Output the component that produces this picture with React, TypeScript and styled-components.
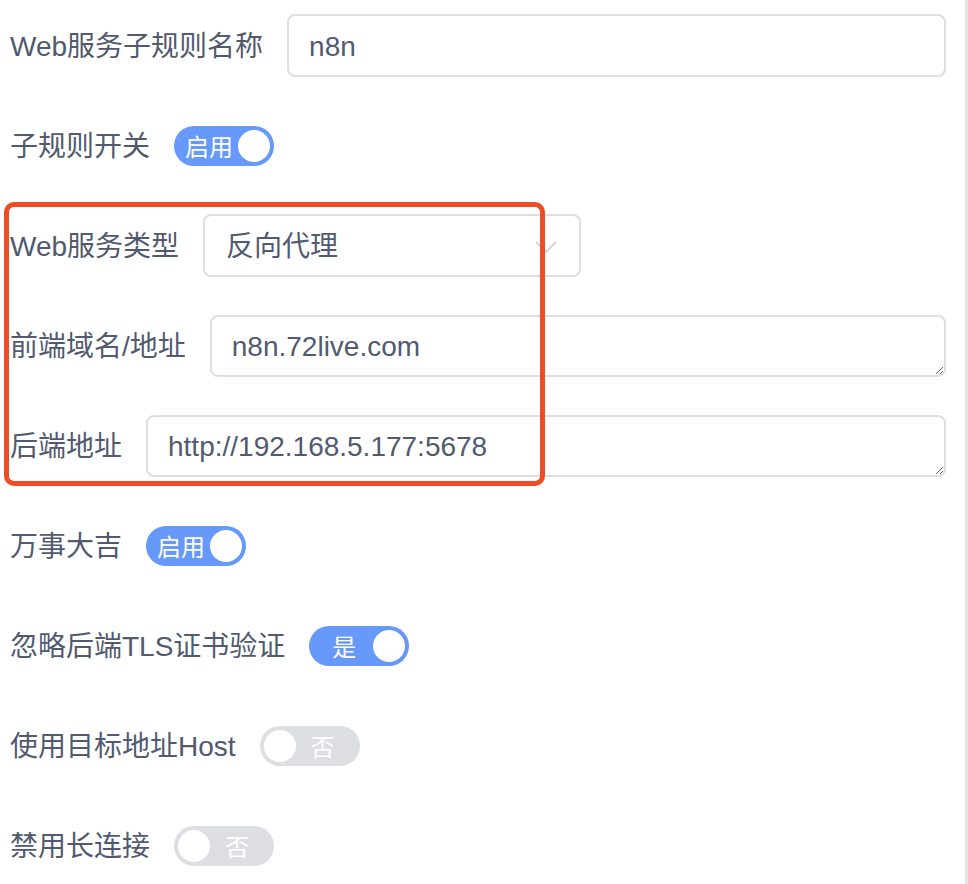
import React from "react";
import styled, { createGlobalStyle } from "styled-components";

const GlobalStyle = createGlobalStyle`
  html, body {
    margin: 0;
    padding: 0;
    background: #ffffff;
  }
  body {
    font-family: "Liberation Sans", "Noto Sans CJK SC", sans-serif;
    color: #515a6e;
  }
`;

const Page = styled.div`
  box-sizing: border-box;
  width: 968px;
  min-height: 884px;
  padding: 14px 19px 0 10px;
  border-right: 3px solid #e4e6ea;
  background: #fff;
`;

const FormItem = styled.div`
  display: flex;
  align-items: center;
  height: 63px;
  margin-bottom: 37px;
`;

const Highlight = styled.div`
  position: relative;
  margin-bottom: 37px;

  & > ${FormItem}:last-child {
    margin-bottom: 0;
  }

  &::after {
    content: "";
    position: absolute;
    top: -12px;
    left: -6px;
    bottom: -9px;
    width: 541px;
    box-sizing: border-box;
    border: 5px solid #ee4b26;
    border-radius: 10px;
    pointer-events: none;
  }
`;

const Label = styled.label`
  flex: none;
  font-size: 28px;
  line-height: 40px;
  color: #515a6e;
  padding-right: 24px;
  padding-top: 2px;
  white-space: nowrap;
`;

const fieldBase = `
  box-sizing: border-box;
  border: 2px solid #dcdee2;
  border-radius: 8px;
  background: #fff;
  font-family: "Liberation Sans", "Noto Sans CJK SC", sans-serif;
  font-size: 28px;
  color: #515a6e;
  outline: none;
`;

const TextInput = styled.input`
  ${fieldBase}
  flex: 1;
  height: 63px;
  padding: 2px 20px 0;
`;

const TextArea = styled.textarea`
  ${fieldBase}
  flex: 1;
  height: 62px;
  padding: 10px 20px 6px;
  line-height: 40px;
  resize: vertical;
  overflow: hidden;
`;

const SelectBox = styled.div`
  ${fieldBase}
  width: 378px;
  height: 63px;
  display: flex;
  align-items: center;
  justify-content: space-between;
  padding: 2px 22px 0 21px;
`;

const SelectValue = styled.span`
  line-height: 40px;
`;

const Switch = styled.div<{ $on: boolean }>`
  flex: none;
  box-sizing: border-box;
  width: 100px;
  height: 40px;
  border-radius: 20px;
  padding: 4px;
  display: flex;
  flex-direction: ${(p) => (p.$on ? "row" : "row-reverse")};
  align-items: center;
  background: ${(p) => (p.$on ? "#6699fa" : "#dcdee2")};
`;

const SwitchText = styled.span<{ $on: boolean }>`
  flex: 1;
  text-align: center;
  font-family: "Noto Sans CJK SC", sans-serif;
  font-size: 24px;
  line-height: 32px;
  color: #fff;
  padding-left: ${(p) => (p.$on ? "2px" : "0")};
  padding-right: ${(p) => (p.$on ? "0" : "6px")};
`;

const Knob = styled.span`
  flex: none;
  width: 32px;
  height: 32px;
  border-radius: 50%;
  background: #fff;
`;

function Toggle({ on, text }: { on: boolean; text: string }) {
  return (
    <Switch $on={on}>
      <SwitchText $on={on}>{text}</SwitchText>
      <Knob />
    </Switch>
  );
}

function Chevron() {
  return (
    <svg width="22" height="12" viewBox="0 0 22 12" fill="none">
      <path d="M1 1 L11 11 L21 1" stroke="#c5c8ce" strokeWidth="1.5" />
    </svg>
  );
}

export default function App() {
  return (
    <>
      <GlobalStyle />
      <Page>
        <FormItem>
          <Label>Web服务子规则名称</Label>
          <TextInput defaultValue="n8n" />
        </FormItem>
        <FormItem>
          <Label>子规则开关</Label>
          <Toggle on text="启用" />
        </FormItem>
        <Highlight>
          <FormItem>
            <Label>Web服务类型</Label>
            <SelectBox>
              <SelectValue>反向代理</SelectValue>
              <Chevron />
            </SelectBox>
          </FormItem>
          <FormItem>
            <Label>前端域名/地址</Label>
            <TextArea defaultValue="n8n.72live.com" />
          </FormItem>
          <FormItem>
            <Label>后端地址</Label>
            <TextArea defaultValue="http://192.168.5.177:5678" />
          </FormItem>
        </Highlight>
        <FormItem>
          <Label>万事大吉</Label>
          <Toggle on text="启用" />
        </FormItem>
        <FormItem>
          <Label>忽略后端TLS证书验证</Label>
          <Toggle on text="是" />
        </FormItem>
        <FormItem>
          <Label>使用目标地址Host</Label>
          <Toggle on={false} text="否" />
        </FormItem>
        <FormItem>
          <Label>禁用长连接</Label>
          <Toggle on={false} text="否" />
        </FormItem>
      </Page>
    </>
  );
}
